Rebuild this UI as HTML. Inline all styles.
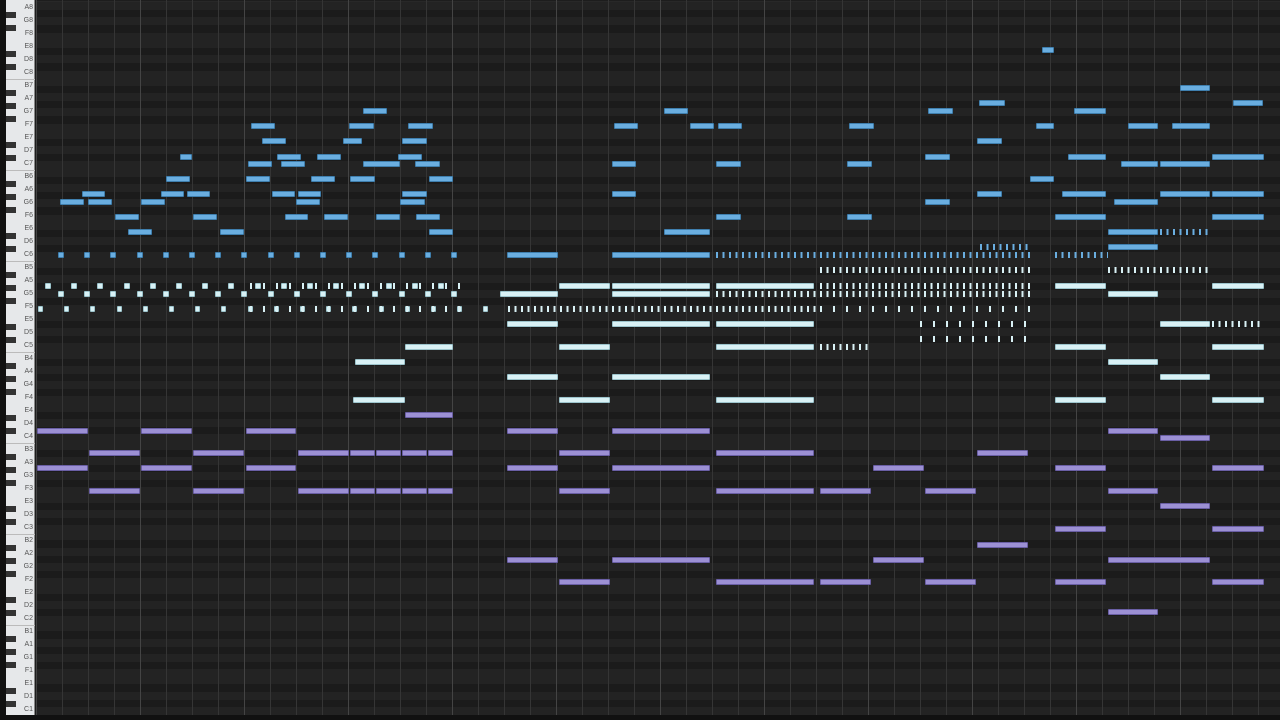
<!DOCTYPE html>
<html><head><meta charset="utf-8"><style>
body{margin:0;width:1280px;height:720px;overflow:hidden;background:#1d1d1d;font-family:"Liberation Sans",sans-serif;position:relative}
#kb{position:absolute;left:0;top:0;width:35px;height:720px;background:#e6e8ea;border-left:6px solid #111;box-sizing:border-box;border-right:1px solid #888}
.row{position:absolute;left:36px;width:1244px}
.n{position:absolute;height:6px;border-radius:1px;box-sizing:border-box}
.b{background:#6aaee0;border:1px solid #3f7fae}
.w{background:#d9f1f5;border:1px solid #9cc4cc}
.p{background:#9c90d4;border:1px solid #6a5fa5}
.lbl{position:absolute;right:1px;font-size:7px;color:#555}
.bk{position:absolute;left:0;width:10px;height:6px;background:#333}
.oc{position:absolute;left:0;width:29px;height:1px;background:#bbb}
.v{position:absolute;top:0;width:1px;height:720px}
</style></head><body>
<div id="kb"></div>
<div id="g"></div>
<script>
var g=document.getElementById('g'),kb=document.getElementById('kb');
function Y(p){return 710-p*7.58;}
var blk=[1,3,6,8,10],names=['C','D','E','F','G','A','B'],wi=[0,2,4,5,7,9,11];
var h='';
for(var p=0;p<=93;p++){var s=p%12;var y=Y(p)-3.79;
 h+='<div class="row" style="top:'+y+'px;height:7.6px;background:'+(blk.indexOf(s)>=0?'#1b1b1b':'#232323')+';border-top:1px solid '+(s==11?'#3a3a3a':'#282828')+'"></div>';}
for(var x=36,k=0;x<1280;x+=26,k++){h+='<div class="v" style="left:'+x+'px;background:'+(k%4==0?'#444':'#353535')+'"></div>';}
h+='<div style="position:absolute;left:0;top:715px;width:1280px;height:5px;background:#111"></div>';
g.innerHTML=h;
var kh='';
for(var i=0;i<55;i++){var o=Math.floor(i/7)+1,n=i%7;var y=710-i*13;
 kh+='<div class="lbl" style="top:'+(y-4)+'px">'+names[n]+o+'</div>';
 if(n==0)kh+='<div class="oc" style="top:'+(y+6)+'px"></div>';
 if(n!=2&&n!=6&&i<54)kh+='<div class="bk" style="top:'+(y-9.5)+'px"></div>';}
kb.innerHTML=kh;
var notes={
p:[[431,[[37,88],[141,192],[246,296],[507,558],[612,710],[1108,1158]]],[438,[[1160,1210]]],
[453,[[89,140],[193,244],[298,349],[350,375],[376,401],[402,427],[428,453],[559,610],[716,814]]],
[453,[[977,1028]]],
[468,[[37,88],[141,192],[246,296],[507,558],[612,710],[873,924],[1055,1106],[1212,1264]]],
[491,[[89,140],[193,244],[298,349],[350,375],[376,401],[402,427],[428,453],[559,610],[716,814],[820,871],[925,976],[1108,1158]]],
[506,[[1160,1210]]],[529,[[1055,1106],[1212,1264]]],[545,[[977,1028]]],
[560,[[507,558],[612,710],[873,924],[1108,1210]]],
[582,[[559,610],[716,814],[820,871],[925,976],[1055,1106],[1212,1264]]],[612,[[1108,1158]]],[415,[[405,453]]]],
w:[[347,[[405,453],[559,610],[716,814],[1055,1106],[1212,1264]]],[324,[[507,558],[612,710],[716,814],[1160,1210]]],
[362,[[355,405],[1108,1158]]],[377,[[507,558],[612,710],[1160,1210]]],[400,[[353,405],[559,610],[716,814],[1055,1106],[1212,1264]]],
[286,[[559,610],[612,710],[716,814],[1055,1106],[1212,1264]]],[294,[[500,558],[612,710],[1108,1158]]]],
b:[[194,[[82,105],[161,184],[187,210],[272,295],[298,321],[402,427],[612,636],[1062,1106],[1160,1210],[1212,1264],[977,1002]]],
[202,[[60,84],[88,112],[141,165],[296,320],[400,425],[925,950],[1114,1158]]],
[217,[[115,139],[193,217],[285,308],[324,348],[376,400],[416,440],[716,741],[847,872],[1055,1106],[1212,1264]]],
[232,[[128,152],[220,244],[429,453],[664,710],[1108,1158]]],[247,[[1108,1158]]],
[179,[[166,190],[246,270],[311,335],[350,375],[429,453],[1030,1054]]],
[164,[[248,272],[281,305],[363,400],[415,440],[612,636],[716,741],[847,872],[1121,1158],[1160,1210]]],
[157,[[180,192],[277,301],[317,341],[398,422],[925,950],[1068,1106],[1212,1264]]],
[141,[[262,286],[343,362],[402,427],[977,1002]]],
[126,[[251,275],[349,374],[408,433],[614,638],[690,714],[718,742],[849,874],[1036,1054],[1128,1158],[1172,1210]]],
[111,[[363,387],[664,688],[928,953],[1074,1106]]],[103,[[979,1005],[1233,1263]]],[88,[[1180,1210]]],[50,[[1042,1054]]],
[255,[[507,558],[612,710]]]]};
var o='';
for(var c in notes){notes[c].forEach(function(r){var y=r[0]-3;r[1].forEach(function(s){o+='<div class="n '+c+'" style="left:'+s[0]+'px;top:'+y+'px;width:'+(s[1]-s[0])+'px"></div>';});});}
for(var x=58;x<460;x+=26.2){o+='<div class="n b" style="left:'+x+'px;top:252px;width:6px"></div>';}
for(var x=45;x<460;x+=26.2){o+='<div class="n w" style="left:'+x+'px;top:283px;width:6px"></div>';o+='<div class="n w" style="left:'+(x+13)+'px;top:291px;width:6px"></div>';}
for(var x=38;x<500;x+=26.2){o+='<div class="n w" style="left:'+x+'px;top:306px;width:5px"></div>';}
function ticks(x1,x2,y,col,step){o+='<div style="position:absolute;left:'+x1+'px;width:'+(x2-x1)+'px;top:'+(y-3)+'px;height:6px;background:repeating-linear-gradient(90deg,'+col+' 0 2px,transparent 2px '+step+'px)"></div>';}
ticks(716,1030,255,'#6aaee0',6.5);ticks(980,1030,247,'#6aaee0',6.5);ticks(1160,1212,232,'#6aaee0',6.5);ticks(1055,1108,255,'#6aaee0',6.5);
ticks(820,1030,270,'#d9f1f5',6.5);ticks(1108,1210,270,'#d9f1f5',6.5);
ticks(820,1030,286,'#d9f1f5',6.5);ticks(716,1030,294,'#d9f1f5',6.5);ticks(820,1030,309,'#d9f1f5',13);ticks(1212,1264,324,'#d9f1f5',6.5);
ticks(820,870,347,'#d9f1f5',6.5);ticks(920,1030,324,'#d9f1f5',13);ticks(920,1030,339,'#d9f1f5',13);
ticks(250,460,286,'#d9f1f5',13);ticks(250,460,309,'#d9f1f5',13);ticks(508,820,309,'#d9f1f5',6.5);
g.insertAdjacentHTML('beforeend',o);
</script>
</body></html>
